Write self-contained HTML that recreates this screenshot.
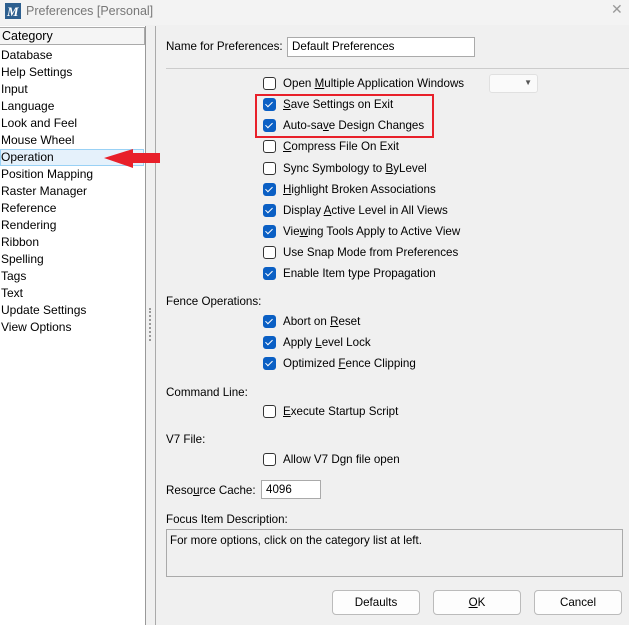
<!DOCTYPE html>
<html><head><style>
*{margin:0;padding:0;box-sizing:border-box}
body{width:629px;height:625px;background:#f0f0f0;font-family:"Liberation Sans",sans-serif;font-size:11.6px;color:#000;position:relative;overflow:hidden}
.a{position:absolute;white-space:nowrap}
.cb{position:absolute;width:13px;height:13px;border:1px solid #333;border-radius:3px;background:#fff}
.cb.on{background:#0a5fc4;border-color:#0a5fc4}
.cb.on:after{content:"";position:absolute;left:3px;top:1px;width:3px;height:6px;border:solid #fff;border-width:0 1.3px 1.3px 0;transform:rotate(45deg)}
.li{position:absolute;left:1px;height:17px;line-height:17px;font-size:12px}
.btn{position:absolute;height:25px;border:1px solid #bbb;border-radius:4px;background:#fdfdfd;text-align:center;line-height:23px}
u{text-decoration:underline}
</style></head><body>
<div class="a" style="left:0;top:0;width:629px;height:25px;background:#f3f3f3"></div>
<svg class="a" style="left:5px;top:3px" width="16" height="16"><rect width="16" height="16" fill="#2d5f8f"/><text x="2" y="13" font-size="13" font-style="italic" font-weight="bold" fill="#fff" font-family="Liberation Serif">M</text></svg>
<div class="a" style="left:26px;top:4px;font-size:12.5px;color:#777">Preferences [Personal]</div>
<div class="a" style="left:611px;top:1px;font-size:14px;color:#999">✕</div>
<div class="a" style="left:0;top:26px;width:146px;height:599px;background:#fff;border-right:1px solid #999"></div>
<div class="a" style="left:0;top:27px;width:145px;height:18px;background:#f5f5f5;border:1px solid #aaa;border-left:none;padding-left:2px;line-height:16px;font-size:12.5px">Category</div>
<div class="a" style="left:0;top:149px;width:144px;height:17px;background:#e5f1fb;border:1px solid #99d1f5"></div>
<div class="li" style="top:47px">Database</div>
<div class="li" style="top:64px">Help Settings</div>
<div class="li" style="top:81px">Input</div>
<div class="li" style="top:98px">Language</div>
<div class="li" style="top:115px">Look and Feel</div>
<div class="li" style="top:132px">Mouse Wheel</div>
<div class="li" style="top:149px">Operation</div>
<div class="li" style="top:166px">Position Mapping</div>
<div class="li" style="top:183px">Raster Manager</div>
<div class="li" style="top:200px">Reference</div>
<div class="li" style="top:217px">Rendering</div>
<div class="li" style="top:234px">Ribbon</div>
<div class="li" style="top:251px">Spelling</div>
<div class="li" style="top:268px">Tags</div>
<div class="li" style="top:285px">Text</div>
<div class="li" style="top:302px">Update Settings</div>
<div class="li" style="top:319px">View Options</div>
<div class="a" style="left:155px;top:26px;width:1px;height:599px;background:#aaa"></div>
<div class="a" style="left:149px;top:308px;width:2px;height:33px;border-left:2px dotted #999"></div>
<svg class="a" style="left:100px;top:145px" width="62" height="26"><polygon points="4,13 33,4 33,8 60,8 60,18 33,18 33,23" fill="#e8202a"/></svg>
<div class="a" style="left:166px;top:40px">Name for Preferences:</div>
<div class="a" style="left:287px;top:37px;width:188px;height:20px;background:#fff;border:1px solid #aaa;padding-left:4px;line-height:18px">Default Preferences</div>
<div class="a" style="left:166px;top:68px;width:463px;height:1px;background:#ccc"></div>
<div class="a" style="left:489px;top:74px;width:49px;height:19px;background:#fafafa;border:1px solid #e0e0e0;border-radius:3px"><span style="position:absolute;right:5px;top:3px;font-size:8px;color:#555">▼</span></div>
<div class="a" style="left:255px;top:94px;width:179px;height:44px;border:2px solid #e8202a"></div>

<div class="cb" style="left:263px;top:77px"></div><div class="a" style="left:283px;top:77px">Open <u>M</u>ultiple Application Windows</div>
<div class="cb on" style="left:263px;top:98px"></div><div class="a" style="left:283px;top:98px"><u>S</u>ave Settings on Exit</div>
<div class="cb on" style="left:263px;top:119px"></div><div class="a" style="left:283px;top:119px">Auto-sa<u>v</u>e Design Changes</div>
<div class="cb" style="left:263px;top:140px"></div><div class="a" style="left:283px;top:140px"><u>C</u>ompress File On Exit</div>
<div class="cb" style="left:263px;top:162px"></div><div class="a" style="left:283px;top:162px">Sync Symbology to <u>B</u>yLevel</div>
<div class="cb on" style="left:263px;top:183px"></div><div class="a" style="left:283px;top:183px"><u>H</u>ighlight Broken Associations</div>
<div class="cb on" style="left:263px;top:204px"></div><div class="a" style="left:283px;top:204px">Display <u>A</u>ctive Level in All Views</div>
<div class="cb on" style="left:263px;top:225px"></div><div class="a" style="left:283px;top:225px">Vie<u>w</u>ing Tools Apply to Active View</div>
<div class="cb" style="left:263px;top:246px"></div><div class="a" style="left:283px;top:246px">Use Snap Mode from Preferences</div>
<div class="cb on" style="left:263px;top:267px"></div><div class="a" style="left:283px;top:267px">Enable Item type Propagation</div>

<div class="a" style="left:166px;top:295px">Fence Operations:</div>
<div class="cb on" style="left:263px;top:315px"></div><div class="a" style="left:283px;top:315px">Abort on <u>R</u>eset</div>
<div class="cb on" style="left:263px;top:336px"></div><div class="a" style="left:283px;top:336px">Apply <u>L</u>evel Lock</div>
<div class="cb on" style="left:263px;top:357px"></div><div class="a" style="left:283px;top:357px">Optimized <u>F</u>ence Clipping</div>
<div class="a" style="left:166px;top:386px">Command Line:</div>
<div class="cb" style="left:263px;top:405px"></div><div class="a" style="left:283px;top:405px"><u>E</u>xecute Startup Script</div>
<div class="a" style="left:166px;top:433px">V7 File:</div>
<div class="cb" style="left:263px;top:453px"></div><div class="a" style="left:283px;top:453px">Allow V7 Dgn file open</div>
<div class="a" style="left:166px;top:484px">Reso<u>u</u>rce Cache:</div>
<div class="a" style="left:261px;top:480px;width:60px;height:19px;background:#fff;border:1px solid #aaa;padding-left:4px;line-height:17px">4096</div>
<div class="a" style="left:166px;top:513px">Focus Item Description:</div>
<div class="a" style="left:166px;top:529px;width:457px;height:48px;border:1px solid #aaa;padding:4px 3px;background:#f0f0f0">For more options, click on the category list at left.</div>
<div class="btn" style="left:332px;top:590px;width:88px">Defaults</div>
<div class="btn" style="left:433px;top:590px;width:88px"><u>O</u>K</div>
<div class="btn" style="left:534px;top:590px;width:88px">Cancel</div>
</body></html>
